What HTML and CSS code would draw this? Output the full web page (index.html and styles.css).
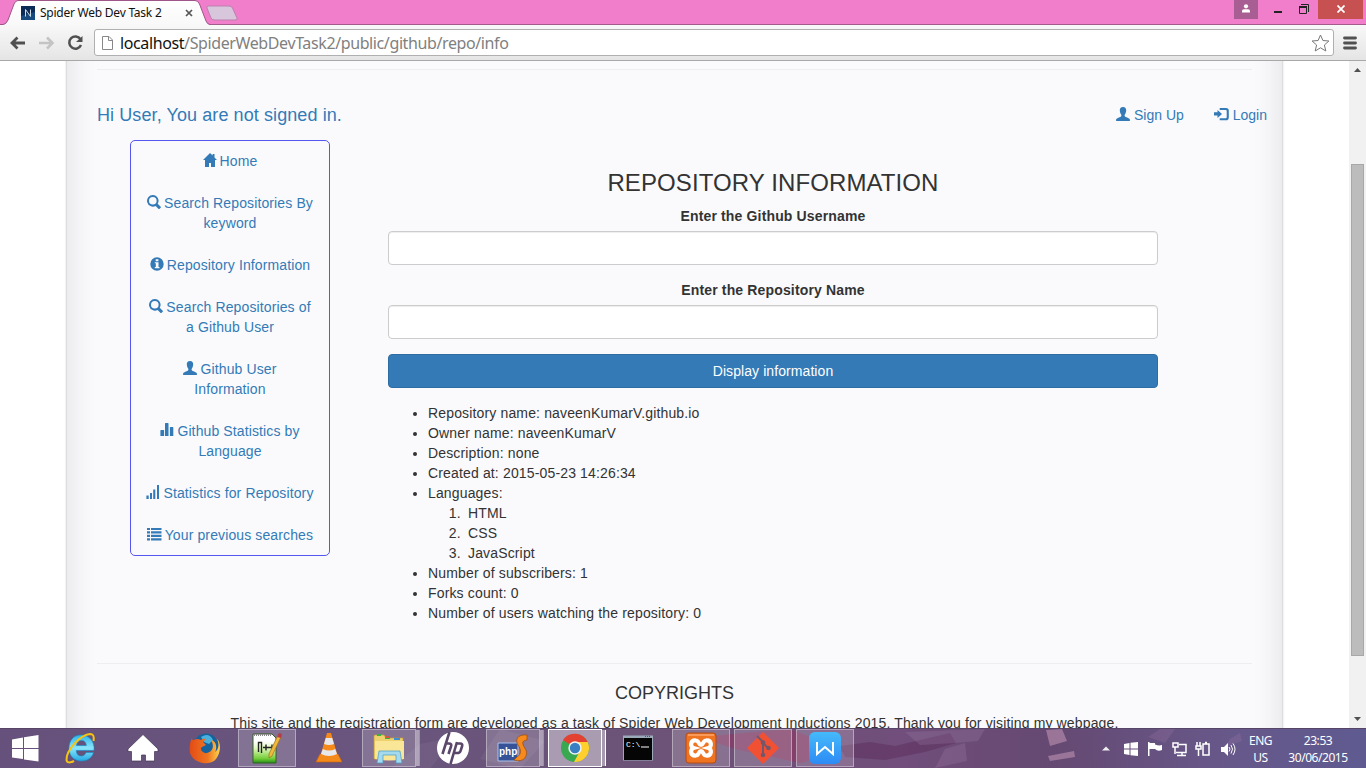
FILE: index.html
```html
<!DOCTYPE html>
<html lang="en">
<head>
<meta charset="utf-8">
<title>Spider Web Dev Task 2</title>
<link rel="stylesheet" href="styles.css">
</head>
<body>
<svg class="defs" width="0" height="0">
  <symbol id="user" viewBox="0 0 14 14"><path d="M7 0C4.700 0 3.700 1.500 3.800 3.600 3.900 5.500 4.600 7 5.300 7.800 5.600 8.900 5.300 9.600 4.300 10 2.300 10.800 .3 11.500 .1 12.600V14H13.900V12.600C13.700 11.500 11.700 10.800 9.700 10 8.700 9.600 8.400 8.900 8.700 7.800 9.400 7 10.100 5.500 10.200 3.600 10.300 1.500 9.300 0 7 0Z"/></symbol>
  <symbol id="home" viewBox="0 0 14 14"><path d="M7 0 0 7H2V14H6V10H8V14H12V7H14L11.500 4.500V1H9.600V2.600Z"/></symbol>
  <symbol id="search" viewBox="0 0 14 14"><path fill-rule="evenodd" d="M5.800 0A5.800 5.800 0 1 0 8.600 10.900L11.600 13.900Q12.100 14.200 12.600 13.800L13.700 12.700Q14.100 12.200 13.700 11.800L10.700 8.800A5.800 5.800 0 0 0 5.800 0ZM5.800 2A3.800 3.800 0 1 1 5.800 9.600 3.800 3.800 0 0 1 5.800 2Z"/></symbol>
  <symbol id="info" viewBox="0 0 14 14"><path fill-rule="evenodd" d="M7 .3A6.700 6.700 0 1 0 7 13.700 6.700 6.700 0 0 0 7 .3ZM5.700 2.200H8.400V4.200H5.700ZM4.800 5.200H8.500V10H9.500V11.200H4.800V10H5.800V6.300H4.800Z"/></symbol>
  <symbol id="stats" viewBox="0 0 14 14"><path d="M.4 7.500Q.4 7 1 7H3.600Q4.100 7 4.100 7.500V13H.4ZM5 .6Q5 0 5.600 0H7.900Q8.500 0 8.500 .6V13H5ZM9.900 4.500Q9.900 4 10.400 4H12.800Q13.300 4 13.300 4.500V13H9.900Z"/></symbol>
  <symbol id="signal" viewBox="0 0 14 14"><path d="M.4 10.500H2.700V14H.4ZM4 8H6V14H4ZM7.200 4.500H9.300V14H7.200ZM11 0H13V14H11Z"/></symbol>
  <symbol id="list" viewBox="0 0 15 14"><path d="M0 1H3V3H0ZM4 1H14.500V3H4ZM0 4.300H3V6.500H0ZM4 4.300H14.500V6.500H4ZM0 7.800H3V10H0ZM4 7.800H14.500V10H4ZM0 11.300H3V13.500H0ZM4 11.300H14.500V13.500H4Z"/></symbol>
  <symbol id="login" viewBox="0 0 15 14"><path d="M0 5.300H3.500V3L8 7 3.500 11V8.500H0ZM5.700 1H12Q14.800 1 14.800 3.800V10.400Q14.800 13.200 12 13.200H5.700V11.200H11.700Q12.700 11.200 12.700 10.200V4Q12.700 3 11.700 3H5.700Z"/></symbol>
</svg>
<div class="screen">
  <header class="titlebar">
    <div class="tab">
      <svg class="tab-shape" width="240" height="25" viewBox="0 0 240 25"><defs><linearGradient id="tg" x2="0" y2="1"><stop offset="0" stop-color="#fff"/><stop offset="1" stop-color="#f8f8f8"/></linearGradient></defs><path d="M0 24.500H3Q6 24.500 8 20L14 4Q15.500 .5 18 .5H195Q198 .5 199.500 4L206 21Q207.500 24.500 210 24.500V26H0Z" fill="url(#tg)" stroke="#9f5588"/><path d="M208 6H229Q231.500 6 232.500 8L237 18Q238 20 235 20H215Q212 20 211 18L207 8Q206.300 6 208 6Z" fill="#d8c6dc" stroke="#bc80ae"/></svg>
      <svg class="favicon" width="14" height="14" viewBox="0 0 14 14"><path fill="#164a7e" d="M0 0H14V14H0Z"/><path fill="#0d2b57" d="M0 0H14V6L0 10Z"/><path d="M4.500 10.500V3.500L9.500 10.500V3.500" fill="none" stroke="#cfdbe5"/></svg>
      <span class="tab-title">Spider Web Dev Task 2</span>
      <svg class="tab-close" width="8" height="8" viewBox="0 0 8 8"><path d="M1 1 7 7M7 1 1 7" stroke="#555" stroke-width="1.700"/></svg>
    </div>
    <div class="window-buttons">
      <div class="profile"><svg width="8" height="9" viewBox="0 0 8 9"><circle cx="4" cy="2.300" r="2.100" fill="#fff"/><path d="M0 8.500V7Q0 5.300 2 5.300H6Q8 5.300 8 7V8.500Z" fill="#fff"/></svg></div>
      <svg class="minmax" width="60" height="19" viewBox="0 0 60 19"><path d="M16 11H24V13H16Z" fill="#222"/><path d="M41.500 13.500V6.500H48.500V13.500ZM43 4.500H50.500V12" fill="none" stroke="#222"/><path d="M41 6H49V8H41Z" fill="#222"/></svg>
      <div class="win-close"><svg width="8" height="8" viewBox="0 0 8 8"><path d="M.5 .5 7.500 7.500M7.500 .5 .5 7.500" stroke="#fff" stroke-width="1.800"/></svg></div>
    </div>
  </header>
  <nav class="toolbar">
    <svg class="nav-icons" width="84" height="20" viewBox="0 0 84 20" fill="none"><path d="M26 10H13M18.500 4.500 13 10 18.500 15.500" stroke="#505050" stroke-width="2.800"/><path d="M40 10H53M48 4.500 53.500 10 48 15.500" stroke="#c4c4c4" stroke-width="2.600"/><path d="M81.500 6.200A6.100 6.100 0 1 0 82 12" stroke="#505050" stroke-width="2.500"/><path d="M83.500 3V9H77Z" fill="#505050"/></svg>
    <div class="address">
      <svg width="13" height="16" viewBox="0 0 13 16"><path d="M1.500 1.500H8L11.500 5V14.500H1.500ZM7.500 1.500V5.500H11.500" fill="#fff" stroke="#888"/></svg>
      <span class="url"><b>localhost</b>/SpiderWebDevTask2/public/github/repo/info</span>
      <svg class="star" width="19" height="18" viewBox="0 0 19 18"><path d="M9.500 1 11.900 6.500 17.900 7 13.400 11 14.800 17 9.500 13.800 4.200 17 5.600 11 1.100 7 7.100 6.500Z" fill="#fff" stroke="#777" stroke-linejoin="round"/></svg>
    </div>
    <svg class="hamburger" width="14" height="14" viewBox="0 0 14 14"><path d="M1.500 2H12.500M1.500 7H12.500M1.500 12H12.500" stroke="#505050" stroke-width="2.800" stroke-linecap="round"/></svg>
  </nav>
  <div class="viewport">
    <div class="page">
      <div class="sheet">
        <hr class="rule">
        <div class="userbar">
          <a class="greeting">Hi User, You are not signed in.</a>
          <div class="account"><a><svg class="gi"><use href="#user"/></svg> Sign Up</a><a><svg class="gi wide"><use href="#login"/></svg> Login</a></div>
        </div>
        <div class="columns">
          <ul class="menu">
            <li><svg class="gi"><use href="#home"/></svg> Home</li>
            <li><svg class="gi"><use href="#search"/></svg> Search Repositories By<br>keyword</li>
            <li><svg class="gi"><use href="#info"/></svg> Repository Information</li>
            <li><svg class="gi"><use href="#search"/></svg> Search Repositories of<br>a Github User</li>
            <li><svg class="gi"><use href="#user"/></svg> Github User<br>Information</li>
            <li><svg class="gi"><use href="#stats"/></svg> Github Statistics by<br>Language</li>
            <li><svg class="gi"><use href="#signal"/></svg> Statistics for Repository</li>
            <li><svg class="gi wide"><use href="#list"/></svg> Your previous searches</li>
          </ul>
          <main class="main">
            <h3>REPOSITORY INFORMATION</h3>
            <label for="u">Enter the Github Username</label>
            <input id="u" class="field" type="text">
            <label for="r">Enter the Repository Name</label>
            <input id="r" class="field" type="text">
            <button class="submit">Display information</button>
            <ul class="details">
              <li>Repository name: naveenKumarV.github.io</li>
              <li>Owner name: naveenKumarV</li>
              <li>Description: none</li>
              <li>Created at: 2015-05-23 14:26:34</li>
              <li>Languages:
                <ol><li>HTML</li><li>CSS</li><li>JavaScript</li></ol>
              </li>
              <li>Number of subscribers: 1</li>
              <li>Forks count: 0</li>
              <li>Number of users watching the repository: 0</li>
            </ul>
          </main>
        </div>
        <hr class="rule">
        <footer class="foot"><h4>COPYRIGHTS</h4><p>This site and the registration form are developed as a task of Spider Web Development Inductions 2015. Thank you for visiting my webpage.</p></footer>
      </div>
    </div>
    <div class="scrollbar">
      <svg width="17" height="17" viewBox="0 0 17 17"><path d="M5 11 8.500 7 12 11Z" fill="#505050"/></svg>
      <div class="thumb"></div>
      <svg width="17" height="17" viewBox="0 0 17 17"><path d="M5 6 8.500 10 12 6Z" fill="#505050"/></svg>
    </div>
  </div>
  <footer class="taskbar">
    <svg class="shards" width="1366" height="40" viewBox="0 0 1366 40"><path d="M390 40 420 15 455 8 430 40ZM500 0 545 12 520 40 480 30Z" fill="#fff" opacity=".05"/><path d="M700 8 790 0 845 22 800 34 735 20Z" fill="#a02858" opacity=".4"/><path d="M840 17 870 13 895 17 950 4 956 14 925 23 885 31 845 28Z" fill="#54204e" opacity=".35"/><path d="M905 3 985 0 978 12 955 14 920 16Z" fill="#a98cb5" opacity=".22"/><path d="M945 20 965 14 967 32 935 39Z" fill="#b392ba" opacity=".2"/><path d="M1046 1 1062 0 1067 12 1050 17ZM1048 27 1074 22 1075 28 1050 32Z" fill="#c799b8" opacity=".55"/><path d="M1148 8 1160 0 1175 0 1165 14ZM1230 10 1240 4 1242 12 1225 18Z" fill="#ad82ae" opacity=".2"/></svg>
    <div class="start"><svg width="27" height="27" viewBox="0 0 27 27" fill="#fff"><path d="M0 4.500 11 2.500V13H0ZM12 2.300 26.500 0V13H12ZM0 14H11V24L0 22.500ZM12 14H26.500V26.500L12 24.400Z"/></svg></div>
    <div class="slot"><svg width="32" height="32" viewBox="0 0 32 32"><defs><linearGradient id="ie" x2="0" y2="1"><stop offset="0" stop-color="#2fb4e8"/><stop offset=".5" stop-color="#8ae5fb"/><stop offset="1" stop-color="#25a9e4"/></linearGradient></defs><path fill-rule="evenodd" d="M16 3C8 3 4 9 4 16.500 4 24 9 29 16.500 29 22.500 29 27 26 28.500 20.500H21C20 23 18.500 24 16.500 24 13 24 11.500 22 11.200 18.500H29C30 9 24 3 16 3ZM11.400 13.500C12 10.500 13.500 8.500 16.500 8.500S21 10.500 21.400 13.500Z" fill="url(#ie)" stroke="#168bc5" stroke-width=".6"/><path d="M28.500 9C29.500 4 28 2 25 2 16 2.500 1 18 1.500 28 1.700 31 5 31 9 29" fill="none" stroke="#f5c413" stroke-width="2"/></svg></div>
    <div class="slot"><svg width="32" height="32" viewBox="0 0 32 32"><path d="M16 2.500 31 17V19.500H27.500V29H18.500V23H14.500V29H4.500V19.500H1V17Z" fill="#fff" stroke="#443454" stroke-width=".7"/></svg></div>
    <div class="slot"><svg width="32" height="32" viewBox="0 0 32 32"><defs><linearGradient id="ff"><stop offset="0" stop-color="#e34b16"/><stop offset=".6" stop-color="#ef7621"/><stop offset="1" stop-color="#ffd34c"/></linearGradient></defs><circle cx="17" cy="14" r="12.500" fill="#16629e"/><path d="M12 5Q20 0 24 8L20 12 15 10Z" fill="#4ab0dc"/><path d="M3 6Q3 9 5 8 8 6 12 8 14 6 17 7L14 10 17 13 13 15C10 17 14 22 18 21 23 20 26 15 22 8 28 9 28 17 26 20 31 16 30 9 27 6 33 10 32 23 25 29 16 34 4 30 1 21 0 15 1 10 3 6Z" fill="url(#ff)"/></svg></div>
    <div class="slot open"><svg width="32" height="32" viewBox="0 0 32 32"><defs><linearGradient id="np" x2="0" y2="1"><stop offset=".25" stop-color="#fff"/><stop offset=".5" stop-color="#ddf7b8"/><stop offset=".85" stop-color="#72cd36"/><stop offset="1" stop-color="#228c19"/></linearGradient></defs><path d="M2 2H21L25 6V31H2Z" fill="url(#np)" stroke="#356325"/><path d="M3 3H20" stroke="#888" stroke-width="2" stroke-dasharray="1 1"/><path d="M7.500 20V10.500H10.500V21M12 15.500H18M15 12.500V18.500M18 15.500H24M21 12.500V18.500" fill="none" stroke="#222" stroke-width="1.400"/><path d="M18 22 27 3 30 5 21 24 18 26Z" fill="#f0b93c" stroke="#9f701e" stroke-width=".7"/><path d="M26 5 28 1 31 2 30 6Z" fill="#b43d45"/></svg></div>
    <div class="slot"><svg width="32" height="32" viewBox="0 0 32 32"><path d="M7 22H25L29 30H3Z" fill="#f38a19" stroke="#ca630b" stroke-width=".6"/><path d="M14 1H18L25 25Q16 29 7 25Z" fill="#f58a1b"/><path d="M12.800 6H19.200L21 12Q16 14 11 12ZM9.800 17Q16 20 22.200 17L24 22Q16 26 8 22Z" fill="#e7e8ec"/></svg></div>
    <div class="slot open stack"><svg width="32" height="32" viewBox="0 0 32 32"><path d="M1 4Q1 3 2 3H11L13 6H30V27H1Z" fill="#eed16f" stroke="#c59b38" stroke-width=".7"/><path d="M4 2H8V4H4ZM12 5H17V7H12Z" fill="#3cae44"/><path d="M13 4H17V6H13Z" fill="#d35841"/><path d="M21 6H27V8H21Z" fill="#3f8fd0"/><path d="M2 9H31V27Q16 30 2 27Z" fill="#f9e697"/><path d="M6 19H27L29 31H23V23H10V31H4Z" fill="#a5d9ee" stroke="#439cc5" stroke-width=".7"/></svg></div>
    <div class="slot"><svg width="32" height="32" viewBox="0 0 32 32"><circle cx="16" cy="16" r="16" fill="#fff"/><path d="M12.500 0 5.500 22M8.500 11.500H12Q15 11.500 14 14.500L11.500 22M20 10 13.500 32M19.500 11.500H23Q26 11.500 25 14.500L23.500 19Q22.700 21 20.500 21H17" fill="none" stroke="#5a4769" stroke-width="2.600"/></svg></div>
    <div class="slot open stack"><svg width="32" height="32" viewBox="0 0 32 32"><path d="M1 11H21V29H1Z" fill="#375398" stroke="#aec4eb"/><text class="php-label" x="2" y="23">php</text><path d="M30 3C20 2 18 8 21 13 24 17 25 22 20 25L17 28C27 31 31 24 29 18 26 13 23 9 30 8Z" fill="#f78a1c" stroke="#9d4b08" stroke-width=".7"/></svg></div>
    <div class="slot open stack active"><svg width="30" height="30" viewBox="0 0 30 30"><circle cx="15" cy="15" r="14" fill="#38a950"/><path d="M15 15 3 7A14 14 0 0 1 27.500 9H15Z" fill="#e34233"/><path d="M17 9H27.700A14 14 0 0 1 14 29L20 18Z" fill="#ffd02d"/><circle cx="15" cy="15" r="6.700" fill="#f2f3f2"/><circle cx="15" cy="15" r="5.200" fill="#397fc3"/></svg></div>
    <div class="slot cmd"><svg width="30" height="26" viewBox="0 0 30 26"><path d="M0 .5H30V25.500H0Z" fill="#9baab9"/><path d="M1 3H29V25H1Z" fill="#050505"/><path d="M22 1.500H28" stroke="#335c8f" stroke-dasharray="1 1"/><text class="cmd-label" x="3" y="12">C:\</text><path d="M18 12H26" stroke="#fff"/></svg></div>
    <div class="slot open"><svg width="32" height="32" viewBox="0 0 32 32"><rect x="1" y="1" width="30" height="30" rx="3" fill="#ef7421" stroke="#b64b13"/><path d="M3 2H29V4H3Z" fill="#fa9a5a"/><path d="M11 8.500C5 8 5 15 8.500 16 5 17 5 24 11 23.500 14 23.500 13.500 19 16 19S18 23.500 21 23.500C27 24 27 17 23.500 16 27 15 27 8 21 8.500 18 8.500 18.500 13 16 13S14 8.500 11 8.500Z" fill="none" stroke="#fff" stroke-width="4.200"/></svg></div>
    <div class="slot open"><svg width="32" height="32" viewBox="0 0 32 32"><path d="M16 0 32 16 16 32 0 16Z" fill="#f15132"/><path d="M10 4 16 10V23M16 11 21 16" fill="none" stroke="#75566a" stroke-width="2"/><circle cx="16" cy="10.500" r="2.300" fill="#75566a"/><circle cx="16" cy="23" r="2.300" fill="#75566a"/><circle cx="21.500" cy="16" r="2.300" fill="#75566a"/></svg></div>
    <div class="slot open"><svg width="32" height="32" viewBox="0 0 32 32"><defs><linearGradient id="wp" x2="0" y2="1"><stop offset="0" stop-color="#45bafa"/><stop offset="1" stop-color="#2d8bf5"/></linearGradient></defs><rect width="32" height="32" rx="6" fill="url(#wp)"/><path d="M8 10V22L16 15 24 22V10" fill="none" stroke="#fff" stroke-width="2"/></svg></div>
    <div class="tray">
      <svg width="137" height="18" viewBox="0 0 137 18"><path d="M0 10.500 4 6.500 8 10.500Z" fill="#eee"/><g fill="#fff"><path d="M22 4 27.500 3V8.500H22ZM28.500 2.800 36 2V8.500H28.500ZM22 9.500H27.500V15L22 14ZM28.500 9.500H36V16L28.500 15.200ZM46 2H47.500V16H46ZM47.500 3H53V4.500Q57 6 60 5V10Q56 12 53 9H47.500Z"/></g><g fill="none" stroke="#fff" stroke-width="1.500"><path d="M77 4.500H84V12.500H74M80 13V15.500M75 15.500H84M71 3H76V7H71ZM73 7V14M101 4H107V15H101ZM103 2.500H105M95 2V6M98 2V6M94 6H99V9H94ZM96.500 9V16"/></g><path d="M127 7Q129 9 127 11.500M129 5Q132 9 129 13.500M131 3.500Q135 9 131 15" fill="none" stroke="#fff"/><path d="M119 7H122L126 3V16L122 12H119Z" fill="#fff"/></svg>
    </div>
    <div class="lang">ENG<br>US</div>
    <div class="clock">23:53<br><span>30/06/2015</span></div>
  </footer>
</div>
</body>
</html>
```
FILE: styles.css
```css
@counter-style spaced-decimal { system: extends decimal; suffix: ".\2002"; }
* { box-sizing: border-box; }
body { margin: 0; overflow: hidden; font: 14px/20px "Liberation Sans", Arial, sans-serif; color: #333; }
svg { display: block; flex: none; }
.defs { position: absolute; }
.screen { width: 1366px; height: 768px; display: flex; flex-direction: column; overflow: hidden; }

.titlebar { height: 25px; flex: none; display: flex; justify-content: space-between; background: #f17eca; border-bottom: 1px solid #a55a8c; }
.tab { position: relative; display: flex; align-items: flex-start; width: 240px; height: 25px; padding: 6px 0 0 21px; }
.tab > * { position: relative; }
.tab > .tab-shape { position: absolute; left: 0; top: 0; }
.tab-title { margin: -3px 0 0 5px; width: 145px; font: 12px/19px "Noto Sans", sans-serif; letter-spacing: -.24px; color: #111; white-space: nowrap; }
.tab-close { margin-top: 3px; }
.window-buttons { display: flex; align-items: flex-start; padding-right: 3px; }
.profile { width: 24px; height: 19px; background: #a95e93; padding: 4px 8px; }
.win-close { width: 45px; height: 19px; background: #c75050; padding: 5px 19px; }

.toolbar { height: 36px; flex: none; display: flex; align-items: center; background: linear-gradient(#f8f8f8, #e5e5e5); border-bottom: 1px solid #a8a8a8; }
.nav-icons { margin-right: 10px; margin-left: -1px; }
.address { width: 1240px; height: 27px; margin-left: 1px; border: 1px solid #b0b0b0; border-radius: 3px; background: #fff; display: flex; align-items: center; padding: 0 3px 0 6px; }
.url { flex: 1; margin-left: 6px; font: 16px/22px "Noto Sans", sans-serif; letter-spacing: -.39px; color: #808080; white-space: nowrap; }
.url b { color: #111; font-weight: 400; }
.hamburger { margin-left: 9px; }

.viewport { height: 667px; flex: none; display: flex; overflow: hidden; background: #fff; }
.page { width: 1349px; height: 667px; overflow: hidden; padding-left: 66px; }
.sheet { width: 1217px; height: 800px; padding: 68px 30px 0; margin-top: -60px; background: #fafafc; border: 1px solid #ddd; border-width: 0 1px; box-shadow: inset 0 0 30px #dedee2, 0 0 2px #ddd; }
.rule { height: 1px; border: 0; margin: 0; background: #eee; }
.userbar { display: flex; justify-content: space-between; height: 20px; margin: 35px -15px 15px 0; color: #337ab7; }
.greeting { font-size: 18px; letter-spacing: .09px; white-space: nowrap; }
.account { display: flex; gap: 30px; white-space: nowrap; }
.gi { display: inline-block; width: 14px; height: 14px; fill: #337ab7; vertical-align: -1px; margin-right: -1px; }
.account .gi { margin-right: 0; }
.gi.wide { width: 15px; }
.columns { display: flex; align-items: flex-start; height: 523px; padding-left: 33px; }
.menu { width: 200px; margin: 0 58px 0 0; padding: 0; list-style: none; border: 1px solid #5555f0; border-radius: 5px; display: flex; flex-direction: column; gap: 2px; text-align: center; color: #337ab7; letter-spacing: .12px; white-space: nowrap; }
.menu li { padding: 10px 0; }
.main { width: 770px; padding-top: 29.6px; letter-spacing: .15px; }
.main h3 { margin: 0 0 10px; font-size: 24px; line-height: 26.4px; font-weight: 400; text-align: center; letter-spacing: .1px; }
.main label { display: block; margin-bottom: 5px; font-weight: 700; text-align: center; }
.field { display: block; width: 100%; height: 34px; margin: 0 0 15px; border: 1px solid #ccc; border-radius: 4px; background: #fff; box-shadow: inset 0 1px 1px rgba(0,0,0,.075); }
.submit { display: block; width: 100%; height: 34px; margin: 0; padding: 0; border: 1px solid #2e6da4; border-radius: 4px; background: #337ab7; color: #fff; font: inherit; letter-spacing: .08px; }
.details { margin: 15px 0 0; padding-left: 40px; }
.details ol { margin: 0; padding-left: 40px; list-style: spaced-decimal; }
.foot { text-align: center; margin: 0 -30px; }
.foot h4 { margin: 19px 0 10px; font-size: 18px; line-height: 20px; font-weight: 400; }
.foot p { margin: 0; letter-spacing: .14px; white-space: nowrap; }
.scrollbar { width: 17px; display: flex; flex-direction: column; background: #f1f1f1; }
.thumb { width: 13px; height: 492px; margin: 86px 2px auto; background: #bcbcbc; border: 1px solid #a8a8a8; }

.taskbar { position: relative; height: 40px; flex: none; display: flex; background: linear-gradient(90deg, #65517b, #69557d 28%, #6c5377 48%, #714e7b 66%, #654972 77%, #67588a 90%, #5e5a90); border-top: 1px solid #564567; }
.taskbar > * { position: relative; }
.taskbar > .shards { position: absolute; left: 0; top: 0; }
.start { width: 50px; padding: 6px 0 0 12px; }
.slot { width: 58px; height: 38px; margin: 0 2px; flex: none; display: flex; align-items: center; justify-content: center; }
.slot.cmd { padding-right: 2px; }
.slot.open { background: rgba(255,255,255,.18); border: 1px solid rgba(255,255,255,.38); }
.slot.stack { width: 54px; margin-right: 6px; box-shadow: 4px 0 0 -1px rgba(255,255,255,.15), 5px 0 0 -1px rgba(255,255,255,.35); }
.slot.active { background: rgba(255,255,255,.42); border-color: #fff; box-shadow: 4px 0 0 -1px #a79bb0, 5px 0 0 -1px #fff; }
.php-label { font: bold 10px "Liberation Sans", sans-serif; fill: #fff; }
.cmd-label { font: 8px "Liberation Mono", monospace; fill: #fff; }
.tray { margin-left: 246px; padding-top: 11px; width: 145px; }
.lang, .clock { color: #fff; font: 12px/17px "Noto Sans", sans-serif; letter-spacing: -.45px; text-align: center; padding-top: 3px; white-space: nowrap; }
.lang { width: 31px; margin-left: -2px; }
.clock { width: 76px; margin-left: 4px; }
```
